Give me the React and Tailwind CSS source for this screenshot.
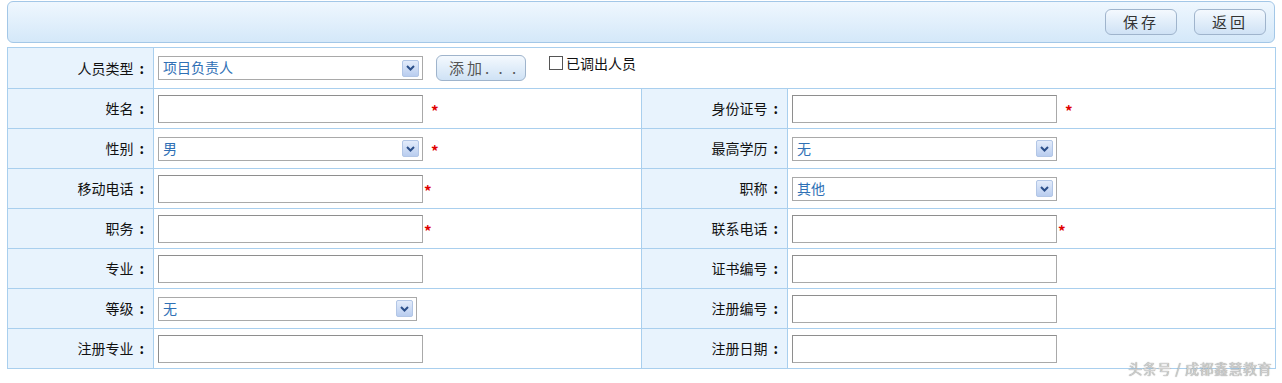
import React from 'react';

const font = { fontFamily: '"Noto Sans CJK SC", "Liberation Sans", sans-serif' };

const Star = ({ gap }) => (
  <span className={`text-[#e00000] text-[15px] font-bold leading-none mt-[4px] ${gap ? 'ml-[8px]' : 'ml-[1px]'}`}>*</span>
);

const TextInput = () => (
  <span className="inline-block align-middle w-[265px] h-[28px] bg-white border border-[#a9a9a9] border-t-[#8e8e8e] border-l-[#8e8e8e]" />
);

const SelectBox = ({ value, width = 'w-[265px]' }) => (
  <span className={`inline-flex items-center justify-between align-middle ${width} h-[24px] bg-white border border-[#a9a9a9] pl-[4px] pr-[3px]`}>
    <span className="text-[14px] text-[#2f70b5] leading-none -mt-[2px]">{value}</span>
    <span className="flex items-center justify-center w-[17px] h-[17px] rounded-[2px] border border-[#b2c6e6] bg-gradient-to-b from-[#e3ecfb] to-[#b9cdef]">
      <svg width="9" height="6" viewBox="0 0 9 6">
        <path d="M1 1 L4.5 4.5 L8 1" fill="none" stroke="#2b4f8a" strokeWidth="2" />
      </svg>
    </span>
  </span>
);

const Btn = ({ children, className = '' }) => (
  <button className={`h-[26px] rounded-[6px] border border-[#9fb4cc] bg-gradient-to-b from-[#f4f9fe] to-[#cfe2f5] text-[15px] text-[#333] tracking-[3px] ${className}`}>
    {children}
  </button>
);

const Label = ({ children }) => (
  <td className="bg-[#e8f3fd] border border-[#a9cfee] text-right pr-[9px] text-[14px] text-[#111]">
    {children}
    <span className="ml-[6px] font-bold">:</span>
  </td>
);

const Value = ({ children }) => (
  <td className="bg-white border border-[#a9cfee] pl-[4px]">
    <div className="flex items-center">{children}</div>
  </td>
);

export default function App() {
  const rows = [
    {
      l1: '姓名', v1: <><TextInput /><Star gap /></>,
      l2: '身份证号', v2: <><TextInput /><Star gap /></>,
    },
    {
      l1: '性别', v1: <><SelectBox value="男" /><Star gap /></>,
      l2: '最高学历', v2: <SelectBox value="无" />,
    },
    {
      l1: '移动电话', v1: <><TextInput /><Star /></>,
      l2: '职称', v2: <SelectBox value="其他" />,
    },
    {
      l1: '职务', v1: <><TextInput /><Star /></>,
      l2: '联系电话', v2: <><TextInput /><Star /></>,
    },
    { l1: '专业', v1: <TextInput />, l2: '证书编号', v2: <TextInput /> },
    { l1: '等级', v1: <SelectBox value="无" width="w-[259px]" />, l2: '注册编号', v2: <TextInput /> },
    { l1: '注册专业', v1: <TextInput />, l2: '注册日期', v2: <TextInput /> },
  ];

  return (
    <div className="relative w-[1282px] h-[383px] bg-white" style={font}>
      <div className="pt-[1px] px-[7px]">
        <div className="h-[42px] rounded-[6px] border border-[#a3c7e7] bg-gradient-to-b from-[#eff7fe] to-[#d4e8f9] flex items-center justify-end gap-[17px] pr-[8px]">
          <Btn className="w-[72px]">保存</Btn>
          <Btn className="w-[72px]">返回</Btn>
        </div>

        <table className="mt-[4px] w-[1268px] border-collapse table-fixed">
          <colgroup>
            <col className="w-[146px]" />
            <col className="w-[488px]" />
            <col className="w-[146px]" />
            <col className="w-[488px]" />
          </colgroup>
          <tbody>
            <tr className="h-[41px]">
              <Label>人员类型</Label>
              <td colSpan={3} className="bg-white border border-[#a9cfee] pl-[4px]">
                <div className="flex items-center">
                  <SelectBox value="项目负责人" />
                  <Btn className="ml-[13px] w-[90px] h-[25px] text-left pl-[12px] tracking-[1px] text-[#555]">添加. . .</Btn>
                  <label className="ml-[23px] -mt-[10px] flex items-center text-[14px] text-[#111]">
                    <span className="inline-block w-[14px] h-[14px] border border-[#555] bg-white mr-[3px]" />
                    已调出人员
                  </label>
                </div>
              </td>
            </tr>
            {rows.map((r) => (
              <tr key={r.l1} className="h-[40px]">
                <Label>{r.l1}</Label>
                <Value>{r.v1}</Value>
                <Label>{r.l2}</Label>
                <Value>{r.v2}</Value>
              </tr>
            ))}
          </tbody>
        </table>
      </div>

      <div className="absolute right-[10px] bottom-[4px] text-[14px] text-[#d0d0d0] tracking-[0.5px]" style={{ textShadow: '0 0 1px #777' }}>
        头条号 / 成都鑫慧教育
      </div>
    </div>
  );
}
